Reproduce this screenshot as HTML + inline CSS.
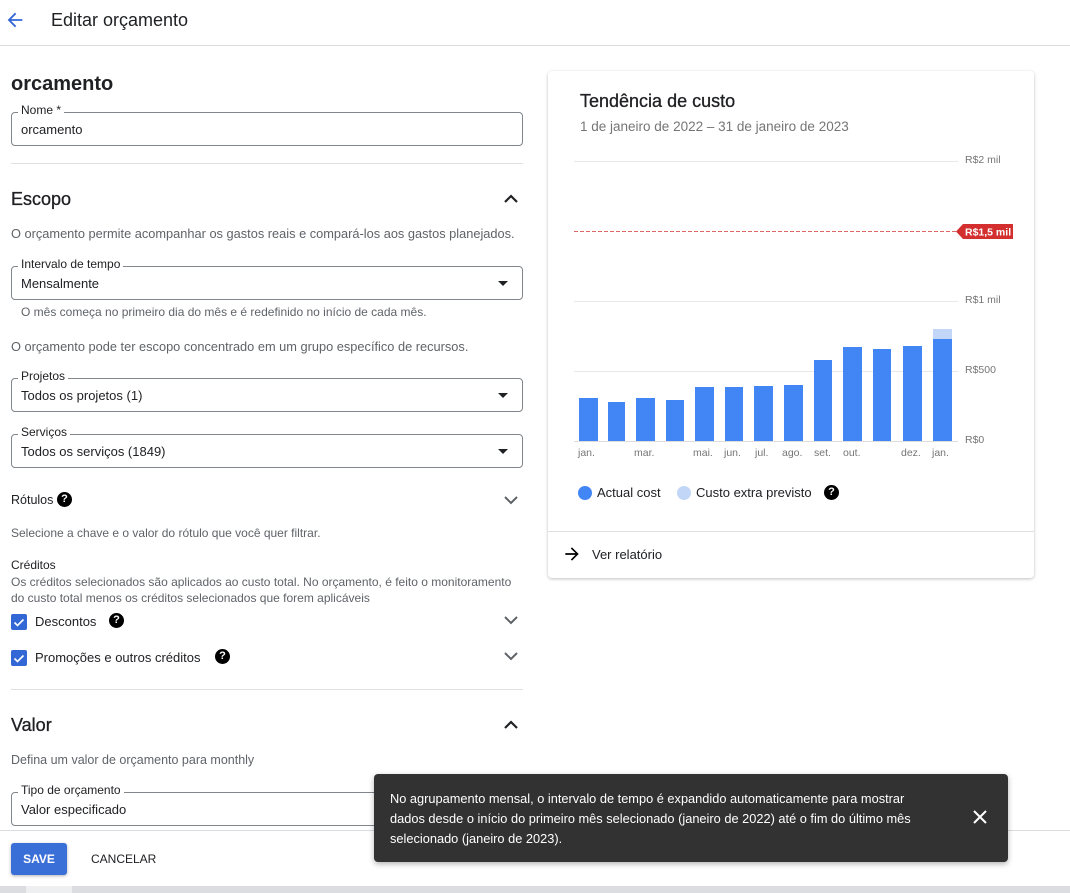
<!DOCTYPE html>
<html><head><meta charset="utf-8"><style>
*{margin:0;padding:0;box-sizing:border-box}
body{width:1070px;height:893px;overflow:hidden;background:#fff;font-family:"Liberation Sans",sans-serif;color:#202124;position:relative}
.a{position:absolute;white-space:nowrap}
.g{color:#5f6368}
.fld{position:absolute;left:11px;width:512px;height:34px;border:1px solid #80868b;border-radius:4px}
.fld .lb{position:absolute;left:6px;top:-10px;background:#fff;padding:0 3px;font-size:12px;color:#202124}
.fld .v{position:absolute;left:9px;top:9px;font-size:13px}
.fld .dd{position:absolute;right:14px;top:14px;width:0;height:0;border-left:5px solid transparent;border-right:5px solid transparent;border-top:5px solid #202124}
.hr{position:absolute;left:11px;width:512px;height:1px;background:#e0e0e0}
.q{position:absolute;width:15px;height:15px;border-radius:50%;background:#000;color:#fff;font-size:11px;font-weight:bold;text-align:center;line-height:15px}
.cb{position:absolute;left:11px;width:16px;height:16px;background:#3367d6;border-radius:2px}
.bar{position:absolute;background:#4285f4}
.xl{position:absolute;top:447px;font-size:10.5px;color:#757575}
.yl{position:absolute;left:965px;font-size:10.5px;color:#757575}
.gl{position:absolute;left:574px;width:384px;height:1px;background:#e8e8e8}
</style></head><body>
<svg class="a" style="left:4px;top:9px" width="22" height="22" viewBox="0 0 24 24"><path d="M20 11H7.8l5.6-5.6L12 4l-8 8 8 8 1.4-1.4L7.8 13H20z" fill="#3367d6"/></svg>
<div class="a" style="left:51px;top:10px;font-size:18px">Editar orçamento</div>
<div class="a" style="left:0;top:45px;width:1070px;height:1px;background:#dadce0"></div>

<div class="a" style="left:11px;top:73px;font-size:20px;font-weight:bold">orcamento</div>
<div class="fld" style="top:112px"><div class="lb">Nome *</div><div class="v">orcamento</div></div>
<div class="hr" style="top:163px"></div>
<div class="a" style="left:11px;top:189px;font-size:18px;-webkit-text-stroke:0.3px #202124">Escopo</div>
<svg class="a" style="left:502px;top:192px" width="18" height="14" viewBox="0 0 18 14"><path d="M3 10l6-6 6 6" stroke="#202124" stroke-width="2.2" fill="none"/></svg>
<div class="a g" style="left:11px;top:226px;font-size:12.8px">O orçamento permite acompanhar os gastos reais e compará-los aos gastos planejados.</div>
<div class="fld" style="top:266px"><div class="lb">Intervalo de tempo</div><div class="v">Mensalmente</div><div class="dd"></div></div>
<div class="a g" style="left:21px;top:305px;font-size:12px">O mês começa no primeiro dia do mês e é redefinido no início de cada mês.</div>
<div class="a g" style="left:11px;top:339px;font-size:12.8px">O orçamento pode ter escopo concentrado em um grupo específico de recursos.</div>
<div class="fld" style="top:378px"><div class="lb">Projetos</div><div class="v">Todos os projetos (1)</div><div class="dd"></div></div>
<div class="fld" style="top:434px"><div class="lb">Serviços</div><div class="v">Todos os serviços (1849)</div><div class="dd"></div></div>
<div class="a" style="left:11px;top:493px;font-size:12.5px">Rótulos</div>
<div class="q" style="left:57px;top:492px">?</div>
<svg class="a" style="left:502px;top:493px" width="18" height="14" viewBox="0 0 18 14"><path d="M3 4l6 6 6-6" stroke="#5f6368" stroke-width="2" fill="none"/></svg>
<div class="a g" style="left:11px;top:526px;font-size:12px">Selecione a chave e o valor do rótulo que você quer filtrar.</div>
<div class="a" style="left:11px;top:558px;font-size:12px">Créditos</div>
<div class="a g" style="left:11px;top:574px;font-size:12px;line-height:16px">Os créditos selecionados são aplicados ao custo total. No orçamento, é feito o monitoramento<br>do custo total menos os créditos selecionados que forem aplicáveis</div>
<div class="cb" style="top:614px"><svg width="16" height="16" viewBox="0 0 16 16"><path d="M3.5 8.5l3 3 6-6" stroke="#fff" stroke-width="1.6" fill="none"/></svg></div>
<div class="a" style="left:35px;top:614px;font-size:13px">Descontos</div>
<div class="q" style="left:109px;top:613px">?</div>
<svg class="a" style="left:502px;top:613px" width="18" height="14" viewBox="0 0 18 14"><path d="M3 4l6 6 6-6" stroke="#5f6368" stroke-width="2" fill="none"/></svg>
<div class="cb" style="top:650px"><svg width="16" height="16" viewBox="0 0 16 16"><path d="M3.5 8.5l3 3 6-6" stroke="#fff" stroke-width="1.6" fill="none"/></svg></div>
<div class="a" style="left:35px;top:650px;font-size:13px">Promoções e outros créditos</div>
<div class="q" style="left:215px;top:649px">?</div>
<svg class="a" style="left:502px;top:649px" width="18" height="14" viewBox="0 0 18 14"><path d="M3 4l6 6 6-6" stroke="#5f6368" stroke-width="2" fill="none"/></svg>
<div class="hr" style="top:689px"></div>
<div class="a" style="left:11px;top:715px;font-size:18px;-webkit-text-stroke:0.3px #202124">Valor</div>
<svg class="a" style="left:502px;top:718px" width="18" height="14" viewBox="0 0 18 14"><path d="M3 10l6-6 6 6" stroke="#202124" stroke-width="2.2" fill="none"/></svg>
<div class="a g" style="left:11px;top:753px;font-size:12.5px">Defina um valor de orçamento para monthly</div>
<div class="fld" style="top:792px;width:600px"><div class="lb">Tipo de orçamento</div><div class="v">Valor especificado</div></div>

<div class="a" style="left:0;top:830px;width:1070px;height:1px;background:#dadce0"></div>
<div class="a" style="left:11px;top:843px;width:56px;height:32px;background:#3b6fd8;border-radius:3px;box-shadow:0 1px 3px rgba(0,0,0,.3);color:#fff;font-size:12px;font-weight:bold;text-align:center;line-height:32px">SAVE</div>
<div class="a" style="left:91px;top:852px;font-size:12px;font-weight:500">CANCELAR</div>
<div class="a" style="left:0;top:886px;width:1070px;height:7px;background:#dcdde0"></div>
<div class="a" style="left:26px;top:886px;width:46px;height:7px;background:#eeeff1"></div>

<!-- card -->
<div class="a" style="left:548px;top:71px;width:486px;height:507px;background:#fff;border-radius:4px;box-shadow:0 1px 3px rgba(0,0,0,.25)"></div>
<div class="a" style="left:580px;top:91px;font-size:18px;-webkit-text-stroke:0.3px #202124">Tendência de custo</div>
<div class="a g" style="left:580px;top:119px;font-size:13.5px;color:#757575">1 de janeiro de 2022 – 31 de janeiro de 2023</div>
<div class="gl" style="top:161px"></div>
<div class="gl" style="top:301px"></div>
<div class="gl" style="top:371px"></div>
<div class="gl" style="top:441px;background:#ddd"></div>
<div class="a" style="left:574px;top:231px;width:386px;height:1px;background:repeating-linear-gradient(90deg,#e06666 0 4px,transparent 4px 6px)"></div>
<div class="yl" style="top:154px">R$2 mil</div>
<div class="yl" style="top:294px">R$1 mil</div>
<div class="yl" style="top:364px">R$500</div>
<div class="yl" style="top:434px">R$0</div>
<svg class="a" style="left:956px;top:224px" width="58" height="15" viewBox="0 0 58 15"><path d="M0 7.5L7 0H57V15H7Z" fill="#d32f2f"/><text x="9" y="11.5" font-family="Liberation Sans" font-size="10.5" font-weight="bold" fill="#fff">R$1,5 mil</text></svg>
<div class="bar" style="left:579px;top:398px;width:19px;height:43px"></div>
<div class="bar" style="left:608px;top:402px;width:17px;height:39px"></div>
<div class="bar" style="left:636px;top:398px;width:19px;height:43px"></div>
<div class="bar" style="left:666px;top:400px;width:18px;height:41px"></div>
<div class="bar" style="left:695px;top:387px;width:19px;height:54px"></div>
<div class="bar" style="left:725px;top:387px;width:18px;height:54px"></div>
<div class="bar" style="left:754px;top:386px;width:19px;height:55px"></div>
<div class="bar" style="left:784px;top:385px;width:19px;height:56px"></div>
<div class="bar" style="left:814px;top:360px;width:18px;height:81px"></div>
<div class="bar" style="left:843px;top:347px;width:19px;height:94px"></div>
<div class="bar" style="left:873px;top:349px;width:18px;height:92px"></div>
<div class="bar" style="left:903px;top:346px;width:19px;height:95px"></div>
<div class="bar" style="left:933px;top:329px;width:19px;height:10px;background:#c2d6f7"></div>
<div class="bar" style="left:933px;top:339px;width:19px;height:102px"></div>
<div class="xl" style="left:578px">jan.</div>
<div class="xl" style="left:634px">mar.</div>
<div class="xl" style="left:693px">mai.</div>
<div class="xl" style="left:724px">jun.</div>
<div class="xl" style="left:755px">jul.</div>
<div class="xl" style="left:782px">ago.</div>
<div class="xl" style="left:814px">set.</div>
<div class="xl" style="left:843px">out.</div>
<div class="xl" style="left:901px">dez.</div>
<div class="xl" style="left:932px">jan.</div>
<div class="a" style="left:578px;top:486px;width:14px;height:14px;border-radius:50%;background:#4285f4"></div>
<div class="a" style="left:597px;top:485px;font-size:13px">Actual cost</div>
<div class="a" style="left:677px;top:486px;width:14px;height:14px;border-radius:50%;background:#c2d6f7"></div>
<div class="a" style="left:696px;top:485px;font-size:13px">Custo extra previsto</div>
<div class="q" style="left:824px;top:485px">?</div>
<div class="a" style="left:548px;top:531px;width:486px;height:1px;background:#e0e0e0"></div>
<svg class="a" style="left:562px;top:544px" width="20" height="20" viewBox="0 0 24 24"><path d="M4 13h12.2l-5.6 5.6L12 20l8-8-8-8-1.4 1.4 5.6 5.6H4z" fill="#000"/></svg>
<div class="a" style="left:592px;top:547px;font-size:13px">Ver relatório</div>

<!-- snackbar -->
<div class="a" style="left:374px;top:774px;width:634px;height:88px;background:#323232;border-radius:4px;box-shadow:0 2px 6px rgba(0,0,0,.3)"></div>
<div class="a" style="left:390px;top:789px;font-size:12.8px;line-height:20px;color:#fff">No agrupamento mensal, o intervalo de tempo é expandido automaticamente para mostrar<br>dados desde o início do primeiro mês selecionado (janeiro de 2022) até o fim do último mês<br>selecionado (janeiro de 2023).</div>
<svg class="a" style="left:972px;top:809px" width="16" height="16" viewBox="0 0 16 16"><path d="M2 2l12 12M14 2L2 14" stroke="#fff" stroke-width="2"/></svg>
</body></html>
